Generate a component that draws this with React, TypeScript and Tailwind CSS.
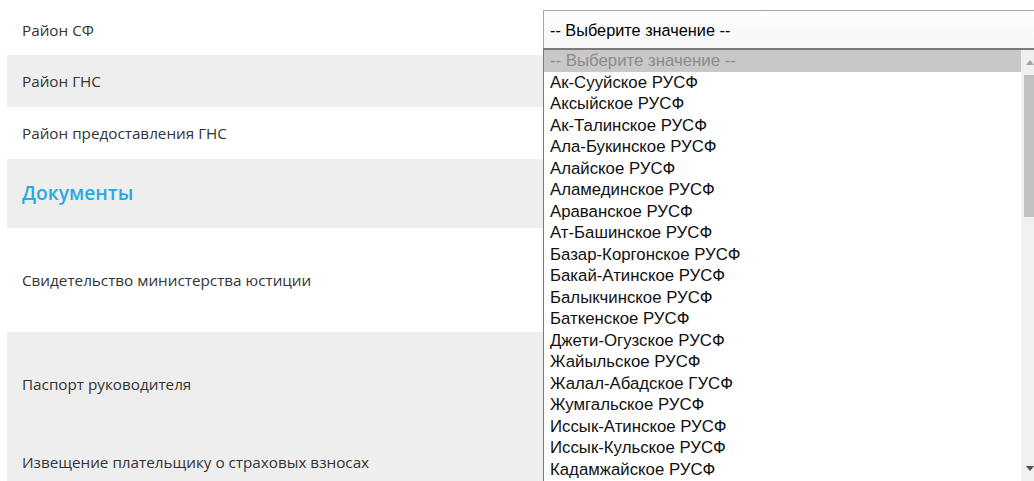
import React from "react";

const districts = [
  "Ак-Сууйское РУСФ",
  "Аксыйское РУСФ",
  "Ак-Талинское РУСФ",
  "Ала-Букинское РУСФ",
  "Алайское РУСФ",
  "Аламединское РУСФ",
  "Араванское РУСФ",
  "Ат-Башинское РУСФ",
  "Базар-Коргонское РУСФ",
  "Бакай-Атинское РУСФ",
  "Балыкчинское РУСФ",
  "Баткенское РУСФ",
  "Джети-Огузское РУСФ",
  "Жайыльское РУСФ",
  "Жалал-Абадское ГУСФ",
  "Жумгальское РУСФ",
  "Иссык-Атинское РУСФ",
  "Иссык-Кульское РУСФ",
  "Кадамжайское РУСФ",
];

const labelFont = { fontFamily: '"Open Sans", "Noto Sans", sans-serif' };
const listFont = { fontFamily: '"Liberation Sans", Arial, sans-serif' };

function Row({
  label,
  gray,
  h,
  children,
}: {
  label: React.ReactNode;
  gray?: boolean;
  h: string;
  children?: React.ReactNode;
}) {
  return (
    <div className={`flex items-center ${h} ${gray ? "bg-[#eeeeee]" : "bg-white"}`}>
      <div className="w-[536px] shrink-0 pl-[15px] text-[15.25px] text-[#333333]" style={labelFont}>
        {label}
      </div>
      {children}
    </div>
  );
}

export default function App() {
  return (
    <div className="relative w-[1034px] h-[481px] overflow-hidden bg-white">
      <div className="pl-[7px]">
        <div className="flex h-[55px] bg-white">
          <div
            className="w-[536px] shrink-0 pl-[15px] pt-[19px] text-[15.25px] text-[#333333]"
            style={labelFont}
          >
            Район СФ
          </div>
          <div
            className="mt-[10px] h-[39px] w-[520px] shrink-0 border border-[#a6a6a6] bg-gradient-to-b from-white to-[#f6f6f6] pl-[6px] pt-[1px] flex items-center text-[16.3px] text-black"
            style={listFont}
          >
            -- Выберите значение --
          </div>
        </div>
        <Row label="Район ГНС" gray h="h-[52px]" />
        <Row label="Район предоставления ГНС" h="h-[52px]" />
        <div className="flex items-center h-[69px] bg-[#eeeeee]">
          <div
            className="pl-[15px] text-[19.3px] font-semibold text-[#29a9e1]"
            style={labelFont}
          >
            Документы
          </div>
        </div>
        <Row label="Свидетельство министерства юстиции" h="h-[104px]" />
        <Row label="Паспорт руководителя" gray h="h-[104px]" />
        <Row label="Извещение плательщику о страховых взносах" gray h="h-[52px]" />
      </div>

      {/* open option list of the first select */}
      <div
        className="absolute left-[543px] top-[48px] w-[500px] h-[440px] border border-[#7a7a7a] border-t-2 bg-white flex"
        style={listFont}
      >
        <div className="flex-1 overflow-hidden">
          <div className="h-[21.5px] bg-[#c8c8c8] text-[#8c8c8c] pl-[6px] text-[16.8px] leading-[21.5px] whitespace-nowrap">
            -- Выберите значение --
          </div>
          {districts.map((d) => (
            <div
              key={d}
              className="h-[21.5px] pl-[6px] text-[16.8px] leading-[21.5px] text-[#111111] whitespace-nowrap"
            >
              {d}
            </div>
          ))}
        </div>
        <div className="relative w-[17px] shrink-0 bg-[#f0f0f0] mr-[4px]">
          <svg className="absolute left-[5px] top-[10px]" width="8" height="5" viewBox="0 0 8 5">
            <path d="M0 5 L4 0 L8 5 Z" fill="#a3a3a3" />
          </svg>
          <div className="absolute left-[3px] right-[2px] top-[25px] h-[142px] bg-[#c1c1c1]" />
          <svg className="absolute left-[5px] top-[416px]" width="8" height="5" viewBox="0 0 8 5">
            <path d="M0 0 L8 0 L4 5 Z" fill="#505050" />
          </svg>
        </div>
      </div>
    </div>
  );
}
